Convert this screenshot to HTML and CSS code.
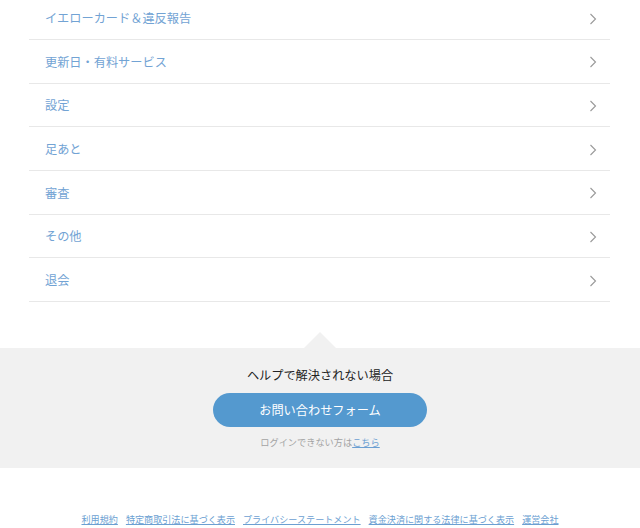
FILE: index.html
```html
<!DOCTYPE html>
<html lang="ja">
<head>
<meta charset="utf-8">
<title>ヘルプ</title>
<link rel="stylesheet" href="styles.css">
</head>
<body>
<ul class="menu">
  <li class="menu-item"><a href="#">イエローカード＆違反報告</a><svg class="chev" width="8" height="12" viewBox="0 0 8 12"><polyline points="1.5,1 6.5,6 1.5,11" fill="none" stroke="#999999" stroke-width="1.1"/></svg></li>
  <li class="menu-item"><a href="#">更新日・有料サービス</a><svg class="chev" width="8" height="12" viewBox="0 0 8 12"><polyline points="1.5,1 6.5,6 1.5,11" fill="none" stroke="#999999" stroke-width="1.1"/></svg></li>
  <li class="menu-item"><a href="#">設定</a><svg class="chev" width="8" height="12" viewBox="0 0 8 12"><polyline points="1.5,1 6.5,6 1.5,11" fill="none" stroke="#999999" stroke-width="1.1"/></svg></li>
  <li class="menu-item"><a href="#">足あと</a><svg class="chev" width="8" height="12" viewBox="0 0 8 12"><polyline points="1.5,1 6.5,6 1.5,11" fill="none" stroke="#999999" stroke-width="1.1"/></svg></li>
  <li class="menu-item"><a href="#">審査</a><svg class="chev" width="8" height="12" viewBox="0 0 8 12"><polyline points="1.5,1 6.5,6 1.5,11" fill="none" stroke="#999999" stroke-width="1.1"/></svg></li>
  <li class="menu-item"><a href="#">その他</a><svg class="chev" width="8" height="12" viewBox="0 0 8 12"><polyline points="1.5,1 6.5,6 1.5,11" fill="none" stroke="#999999" stroke-width="1.1"/></svg></li>
  <li class="menu-item"><a href="#">退会</a><svg class="chev" width="8" height="12" viewBox="0 0 8 12"><polyline points="1.5,1 6.5,6 1.5,11" fill="none" stroke="#999999" stroke-width="1.1"/></svg></li>
</ul>

<section class="contact">
  <h2 class="contact-title">ヘルプで解決されない場合</h2>
  <a class="contact-btn" href="#">お問い合わせフォーム</a>
  <p class="contact-note">ログインできない方は<a href="#">こちら</a></p>
</section>

<footer class="footer">
  <a href="#">利用規約</a>
  <a href="#">特定商取引法に基づく表示</a>
  <a href="#">プライバシーステートメント</a>
  <a href="#">資金決済に関する法律に基づく表示</a>
  <a href="#">運営会社</a>
</footer>
</body>
</html>
```

FILE: styles.css
```css
* { box-sizing: border-box; }

html, body {
  margin: 0;
  padding: 0;
  background: #ffffff;
  font-family: "Noto Sans CJK JP", "Noto Sans", sans-serif;
  overflow: hidden;
}

.menu {
  list-style: none;
  margin: -3.67px 30px 0 29px;
  padding: 0;
}

.menu-item {
  display: flex;
  align-items: center;
  justify-content: space-between;
  height: 43.67px;
  padding: 0 13px 0 16px;
  border-bottom: 1px solid #e8e8e8;
}

.menu-item a {
  color: #72a3d4;
  text-decoration: none;
  font-size: 12.2px;
  font-weight: 400;
  line-height: 18px;
  padding-top: 1px;
}

.chev {
  display: block;
  margin-top: 2px;
}

.contact {
  position: relative;
  margin-top: 46px;
  background: #f1f1f1;
  padding: 18px 0 19px;
  text-align: center;
}

.contact::before {
  content: "";
  position: absolute;
  left: 50%;
  top: -16px;
  margin-left: -16px;
  border-left: 16px solid transparent;
  border-right: 16px solid transparent;
  border-bottom: 16px solid #f1f1f1;
}

.contact-title {
  margin: 0;
  font-size: 12.2px;
  line-height: 18px;
  font-weight: 400;
  color: #222222;
}

.contact-btn {
  display: block;
  width: 214px;
  height: 34px;
  margin: 9px auto 0;
  border-radius: 17px;
  background: #5499cf;
  color: #ffffff;
  text-decoration: none;
  font-size: 12.2px;
  line-height: 34px;
}

.contact-note {
  margin: 8px 0 0;
  font-size: 9.2px;
  line-height: 14px;
  color: #a3a3a3;
}

.contact-note a {
  color: #6c9fd2;
  text-decoration: underline;
}

.footer {
  display: flex;
  justify-content: center;
  gap: 8px;
  margin-top: 44px;
  font-size: 9.1px;
  line-height: 14px;
}

.footer a {
  color: #6c9fd2;
  text-decoration: underline;
}
```
